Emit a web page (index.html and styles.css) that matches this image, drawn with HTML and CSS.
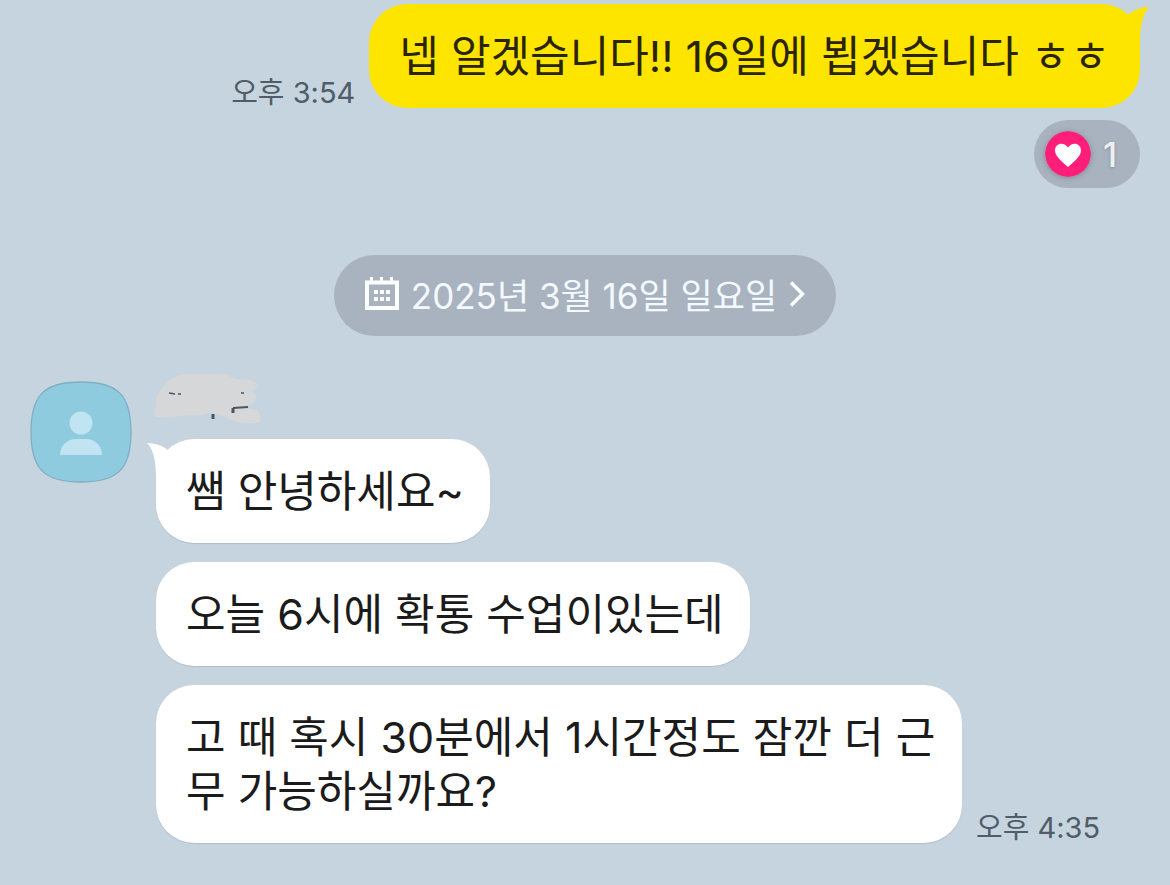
FILE: index.html
```html
<!DOCTYPE html>
<html lang="ko">
<head>
    <meta charset="UTF-8">
    <meta name="viewport" content="width=device-width, initial-scale=1.0">
    <title>채팅</title>
    <link rel="stylesheet" href="styles.css">
</head>
<body>
    <main class="chat">
        <section class="sent">
            <div class="message-row">
                <time class="time" datetime="15:54">오후 3:54</time>
                <p class="bubble bubble-sent">
                    넵 알겠습니다!! 16일에 뵙겠습니다 ㅎㅎ
                    <svg class="tail tail-right" viewBox="0 0 34 34" aria-hidden="true">
                        <path d="M22 11 Q31 3 43 3 Q34 13 34 38 H0 V24 Z"/>
                    </svg>
                </p>
            </div>
            <button class="reaction" type="button">
                <svg class="heart" viewBox="0 0 46 46" aria-hidden="true">
                    <circle cx="23" cy="23" r="23" fill="#ff1f7a"/>
                    <path d="M23 36 C19 32 10 26 10 19.500 C10 11.500 19.500 10.500 23 16.500 C26.500 10.500 36 11.500 36 19.500 C36 26 27 32 23 36 Z" fill="#fff"/>
                </svg>
                <span>1</span>
            </button>
        </section>

        <button class="date" type="button">
            <svg class="calendar" viewBox="0 0 34 34" aria-hidden="true">
                <path d="M2 5.500 H32 V31 H2 Z" fill="none" stroke="#fff" stroke-width="4"/>
                <path d="M5 0h3v5H5zM15 0h3v5h-3zM25 0h3v5h-3z" fill="#fff"/>
                <path d="M9 13h4v4H9zM15 13h4v4h-4zM21 13h4v4h-4zM9 20h4v4H9zM15 20h4v4h-4zM21 20h4v4h-4z" fill="#fff"/>
            </svg>
            <span>2025년 3월 16일 일요일</span>
            <svg class="arrow" viewBox="0 0 16 26" aria-hidden="true">
                <path d="M2 1.500 L13.500 13 L2 24.500" fill="none" stroke="#fff" stroke-width="3.400"/>
            </svg>
        </button>

        <section class="received">
            <svg class="avatar" viewBox="0 0 102 102" role="img" aria-label="프로필">
                <path d="M51 1 C88 1 101 14 101 51 C101 88 88 101 51 101 C14 101 1 88 1 51 C1 14 14 1 51 1 Z" fill="#8ecbdf" stroke="#7eafc3" stroke-width="1.300"/>
                <circle cx="51" cy="42" r="11.500" fill="#c0e4f1"/>
                <path d="M30 74 C30 64 38 58 46 58 H56 C64 58 72 64 72 74 Z" fill="#c0e4f1"/>
            </svg>
            <div class="messages">
                <!-- name, scribbled over -->
                <svg class="name" viewBox="0 0 110 50" aria-hidden="true">
                    <path d="M4 21 L14 8 Q21 1 31 0 H66 Q76 1 82 5 L98 6 Q104 7 104 12 Q103 15 98 17 Q105 20 103 25 Q101 30 90 34 L104 36 Q110 41 106 49 H94 Q80 48 72 43 L57 38 Q48 43 34 41 Q18 44 3 43 Q-1 38 3 33 Z" fill="#d6d7d8"/>
                    <g fill="none" stroke="#4b5661">
                        <path d="M16 19 L22 20 M25 20 H28 M88 19 H91" stroke-width="1.500"/>
                        <path d="M60 40 V45 M80 39 V34" stroke-width="3"/>
                        <path d="M80 34 L95 33" stroke-width="2"/>
                    </g>
                </svg>
                <p class="bubble">
                    쌤 안녕하세요~
                    <svg class="tail tail-left" viewBox="0 0 34 34" aria-hidden="true">
                        <path d="M21 11 Q12 4 0 4 Q9 13 9 38 H34 V24 Z"/>
                    </svg>
                </p>
                <p class="bubble">오늘 6시에 확통 수업이있는데</p>
                <div class="message-row">
                    <p class="bubble">고 때 혹시 30분에서 1시간정도 잠깐 더 근무 가능하실까요?</p>
                    <time class="time" datetime="16:35">오후 4:35</time>
                </div>
            </div>
        </section>
    </main>
</body>
</html>
```

FILE: styles.css
```css
* {
    box-sizing: border-box;
}

body {
    margin: 0;
    min-height: 100vh;
    background-color: #c6d4df;
    color: #1b1b1b;
    font-family: Inter, "Noto Sans CJK KR", sans-serif;
}

p {
    margin: 0;
}

svg {
    display: block;
    flex-shrink: 0;
}

button {
    border: none;
    font-family: inherit;
    cursor: pointer;
}

.chat {
    display: flex;
    flex-direction: column;
    padding: 4px 30px 30px;
}

.sent {
    display: flex;
    flex-direction: column;
    align-items: flex-end;
    gap: 12px;
}

.message-row {
    display: flex;
    align-items: flex-end;
    gap: 14px;
}

.bubble {
    position: relative;
    max-width: 806px;
    padding: 25px 26px 25px 30px;
    border-radius: 38px;
    background-color: #fff;
    box-shadow: 0 1px 1px rgba(90, 110, 130, 0.2);
    font-size: 43px;
    line-height: 54px;
}

.bubble-sent {
    padding-right: 30px;
    background-color: #fee500;
    box-shadow: none;
    color: #2a2500;
}

.tail {
    position: absolute;
    top: 0;
    width: 34px;
    height: 34px;
    overflow: visible;
}

.tail-left {
    left: -9px;
    fill: #fff;
}

.tail-right {
    right: 0;
    fill: #fee500;
}

.time {
    flex-shrink: 0;
    color: #505d68;
    font-size: 29px;
    line-height: 30px;
}

.reaction {
    display: flex;
    align-items: center;
    gap: 12px;
    height: 68px;
    padding: 0 23px 0 11px;
    border-radius: 34px;
    background-color: #a8b3bf;
    color: #eeeff1;
    font-size: 34px;
    font-weight: 500;
    text-shadow: 0 1px 3px rgba(90, 100, 110, 0.5);
}

.heart {
    width: 46px;
    height: 46px;
    border-radius: 50%;
    box-shadow: 0 1px 5px rgba(90, 100, 110, 0.5);
}

.date {
    display: flex;
    align-items: center;
    align-self: center;
    gap: 12px;
    margin: 67px 0 38px;
    padding: 0 31px 4px;
    height: 81px;
    border-radius: 41px;
    background-color: #a8b3bf;
    color: #f4f8ff;
    font-size: 35px;
}

.calendar {
    width: 34px;
    height: 34px;
}

.arrow {
    width: 16px;
    height: 26px;
}

.received {
    display: flex;
    align-items: flex-start;
    gap: 24px;
}

.avatar {
    width: 102px;
    height: 102px;
    margin-top: 7px;
}

.messages {
    display: flex;
    flex-direction: column;
    align-items: flex-start;
    gap: 19px;
}

.name {
    width: 110px;
    height: 50px;
    margin: 0 0 -4px -3px;
}
```
